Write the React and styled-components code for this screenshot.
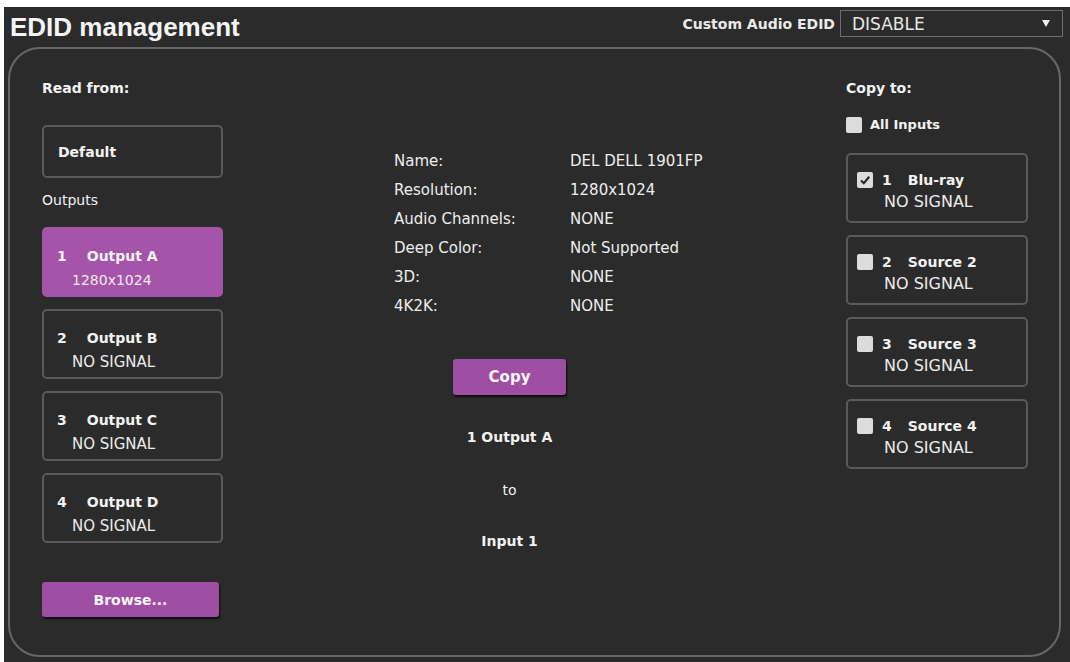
import React from 'react';
import styled, { createGlobalStyle } from 'styled-components';

const Global = createGlobalStyle`
  html, body { margin: 0; padding: 0; background: #ffffff; }
  body { font-family: "DejaVu Sans", "Liberation Sans", sans-serif; }
  * { box-sizing: border-box; }
`;

const Screen = styled.div`
  margin: 7px 0 0 4px;
  width: 1066px;
  height: 655px;
  background: #2b2b2b;
  color: #f2f2f2;
  display: flex;
  flex-direction: column;
`;

const Header = styled.header`
  height: 40px;
  display: flex;
  align-items: center;
  justify-content: space-between;
  padding: 0 7px 0 6px;
`;

const Title = styled.h1`
  margin: 0;
  font-family: "Liberation Sans", Arial, sans-serif;
  font-weight: bold;
  font-size: 26px;
  line-height: 30px;
  color: #f4f4f4;
`;

const AudioGroup = styled.div`
  align-self: flex-start;
  margin-top: 3px;
  display: flex;
  align-items: center;
  gap: 5px;
`;

const AudioLabel = styled.span`
  font-weight: bold;
  font-size: 14px;
  color: #eaeaea;
`;

const Select = styled.div`
  width: 223px;
  height: 27px;
  border: 1px solid #6e6e6e;
  display: flex;
  align-items: center;
  justify-content: space-between;
  padding: 0 12px 0 11px;
  font-size: 17px;
  color: #e6e6e6;
`;

const Caret = styled.span`
  width: 0;
  height: 0;
  border-left: 4px solid transparent;
  border-right: 4px solid transparent;
  border-top: 7px solid #f4f4f4;
`;

const Panel = styled.main`
  margin-left: 4px;
  width: 1053px;
  height: 610px;
  border: 2px solid #686868;
  border-radius: 32px;
  display: flex;
  padding: 0 31px 0 32px;
`;

const Column = styled.section`
  width: ${p => p.$width}px;
  display: flex;
  flex-direction: column;
  padding-top: 31px;
`;

const Heading = styled.div`
  font-weight: ${p => (p.$bold ? 'bold' : 'normal')};
  font-size: 14px;
  line-height: 16px;
  margin-top: ${p => p.$mt || 0}px;
`;

const DefaultBox = styled.div`
  margin-top: 29px;
  height: 53px;
  border: 2px solid #5a5a5a;
  border-radius: 5px;
  display: flex;
  align-items: center;
  padding-left: 14px;
  font-weight: bold;
  font-size: 14px;
`;

const OutputList = styled.div`
  margin-top: 19px;
  display: flex;
  flex-direction: column;
  gap: 12px;
`;

const PortBox = styled.div`
  height: 70px;
  border: 2px solid ${p => (p.$selected ? '#a653aa' : '#5a5a5a')};
  background: ${p => (p.$selected ? '#a653aa' : 'transparent')};
  border-radius: 5px;
  padding: ${p => p.$pt}px 0 0 ${p => p.$pl}px;
  display: flex;
  flex-direction: column;
`;

const PortTitle = styled.div`
  display: flex;
  align-items: center;
  font-weight: bold;
  font-size: 14px;
  line-height: 16px;
`;

const PortNum = styled.span`
  margin-right: ${p => p.$gap}px;
`;

const PortSub = styled.div`
  margin-top: ${p => p.$mt}px;
  padding-left: ${p => p.$pl}px;
  font-size: ${p => p.$size}px;
  line-height: 16px;
  color: #ececec;
`;

const PurpleButton = styled.button`
  width: ${p => p.$w}px;
  height: ${p => p.$h || 35}px;
  margin-top: ${p => p.$mt || 0}px;
  border: none;
  border-radius: 3px;
  background: #a04ea4;
  color: #f6f6f6;
  font-family: "DejaVu Sans", sans-serif;
  font-weight: bold;
  font-size: ${p => p.$size || 14}px;
  box-shadow: 1px 2px 2px rgba(0, 0, 0, 0.7);
  padding: 0;
`;

const Middle = styled.section`
  flex: 1;
  display: flex;
  flex-direction: column;
  padding-top: 97px;
`;

const InfoTable = styled.div`
  margin-left: 171px;
  display: grid;
  grid-template-columns: 176px auto;
  grid-auto-rows: 29px;
  align-items: center;
  font-size: 15px;
  color: #eeeeee;
`;

const Transfer = styled.div`
  margin-left: 230px;
  width: 113px;
  margin-top: 39px;
  display: flex;
  flex-direction: column;
  align-items: center;
`;

const TransferText = styled.div`
  margin-top: ${p => p.$mt}px;
  font-size: 14px;
  line-height: 16px;
  font-weight: ${p => (p.$bold ? 'bold' : 'normal')};
`;

const CheckRow = styled.div`
  margin-top: 21px;
  display: flex;
  align-items: center;
  gap: 8px;
  font-weight: bold;
  font-size: 13px;
  line-height: 16px;
`;

const Box = styled.span`
  width: 16px;
  height: 16px;
  flex: none;
  background: #dcdcdc;
  border-radius: 2px;
  display: inline-flex;
  align-items: center;
  justify-content: center;
  margin-right: ${p => p.$mr || 0}px;
`;

const InputList = styled.div`
  margin-top: 20px;
  display: flex;
  flex-direction: column;
  gap: 12px;
`;

const CheckBox = ({ checked, mr }) => (
  <Box $mr={mr}>
    {checked && (
      <svg width="12" height="12" viewBox="0 0 12 12">
        <path d="M2 6.5 L4.8 9.2 L10.2 2.8" fill="none" stroke="#2a2a2a" strokeWidth="2.2" />
      </svg>
    )}
  </Box>
);

const outputs = [
  { n: 1, name: 'Output A', sub: '1280x1024', selected: true },
  { n: 2, name: 'Output B', sub: 'NO SIGNAL' },
  { n: 3, name: 'Output C', sub: 'NO SIGNAL' },
  { n: 4, name: 'Output D', sub: 'NO SIGNAL' },
];

const inputs = [
  { n: 1, name: 'Blu-ray', checked: true },
  { n: 2, name: 'Source 2' },
  { n: 3, name: 'Source 3' },
  { n: 4, name: 'Source 4' },
];

const info = [
  ['Name:', 'DEL DELL 1901FP'],
  ['Resolution:', '1280x1024'],
  ['Audio Channels:', 'NONE'],
  ['Deep Color:', 'Not Supported'],
  ['3D:', 'NONE'],
  ['4K2K:', 'NONE'],
];

export default function App() {
  return (
    <>
      <Global />
      <Screen>
        <Header>
          <Title>EDID management</Title>
          <AudioGroup>
            <AudioLabel>Custom Audio EDID</AudioLabel>
            <Select>
              <span>DISABLE</span>
              <Caret />
            </Select>
          </AudioGroup>
        </Header>
        <Panel>
          <Column $width={181}>
            <Heading $bold>Read from:</Heading>
            <DefaultBox>Default</DefaultBox>
            <Heading $mt={14}>Outputs</Heading>
            <OutputList>
              {outputs.map(o => (
                <PortBox key={o.n} $selected={o.selected} $pt={19} $pl={13}>
                  <PortTitle>
                    <PortNum $gap={20}>{o.n}</PortNum>
                    {o.name}
                  </PortTitle>
                  <PortSub $mt={8} $pl={15} $size={o.selected ? 14 : 15}>{o.sub}</PortSub>
                </PortBox>
              ))}
            </OutputList>
            <PurpleButton $w={177} $mt={39}>Browse...</PurpleButton>
          </Column>
          <Middle>
            <InfoTable>
              {info.map(([k, v]) => (
                <React.Fragment key={k}>
                  <span>{k}</span>
                  <span>{v}</span>
                </React.Fragment>
              ))}
            </InfoTable>
            <Transfer>
              <PurpleButton $w={113} $h={36} $size={15}>Copy</PurpleButton>
              <TransferText $bold $mt={34}>1 Output A</TransferText>
              <TransferText $mt={37}>to</TransferText>
              <TransferText $bold $mt={35}>Input 1</TransferText>
            </Transfer>
          </Middle>
          <Column $width={182}>
            <Heading $bold>Copy to:</Heading>
            <CheckRow>
              <CheckBox />
              All Inputs
            </CheckRow>
            <InputList>
              {inputs.map(i => (
                <PortBox key={i.n} $pt={17} $pl={9}>
                  <PortTitle>
                    <CheckBox checked={i.checked} mr={9} />
                    <PortNum $gap={16}>{i.n}</PortNum>
                    {i.name}
                  </PortTitle>
                  <PortSub $mt={6} $pl={27} $size={16}>NO SIGNAL</PortSub>
                </PortBox>
              ))}
            </InputList>
          </Column>
        </Panel>
      </Screen>
    </>
  );
}
